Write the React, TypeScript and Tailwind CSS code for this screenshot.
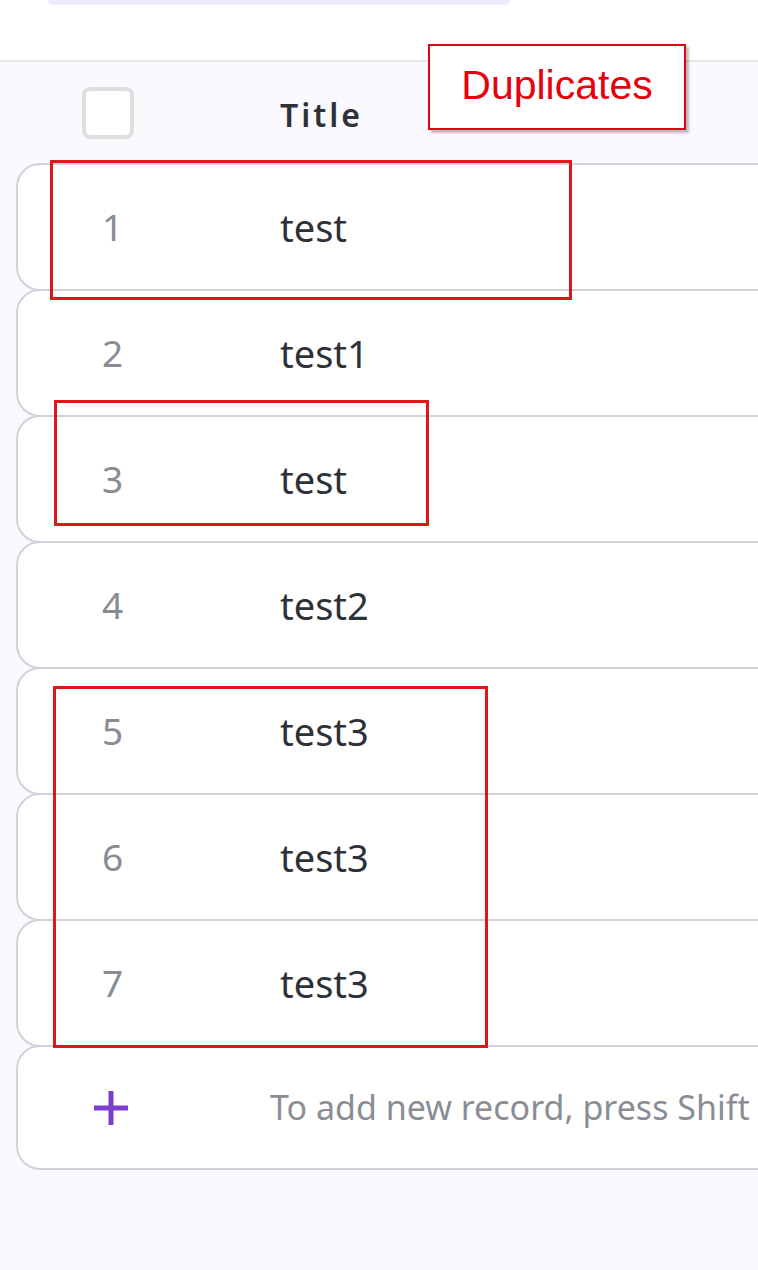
import { Fragment } from 'react';

const rows = [
  { id: 1, title: 'test' },
  { id: 2, title: 'test1' },
  { id: 3, title: 'test' },
  { id: 4, title: 'test2' },
  { id: 5, title: 'test3' },
  { id: 6, title: 'test3' },
  { id: 7, title: 'test3' },
];

const PlusIcon = () => (
  <svg width="36" height="36" viewBox="0 0 36 36" fill="none">
    <path d="M18 1v34M1 18h34" stroke="#7b3fcf" strokeWidth="5" />
  </svg>
);

const App = () => {
  return (
    <main className="relative w-[758px] h-[1270px] overflow-hidden bg-[#faf9fe] font-['Noto_Sans',sans-serif]">
      <div className="h-[62px] bg-white border-b-2 border-[#e8e6ed]">
        <div className="ml-[48px] w-[462px] h-[5px] bg-[#efeafb] rounded-b-xl" />
      </div>

      <div className="flex items-center h-[101px]">
        <div className="ml-[82px] w-[52px] h-[52px] rounded-lg border-4 border-[#dedede] bg-white" />
        <span className="ml-[146px] mt-1 text-[32px] font-semibold tracking-[3px] text-[#2e3138]">Title</span>
      </div>

      <div className="flex flex-col pl-4">
        {rows.map((row, i) => (
          <Fragment key={row.id}>
            <div
              className={`flex items-center w-[900px] h-[128px] bg-white border-2 border-[#d4d0dc] rounded-l-[24px] ${
                i > 0 ? '-mt-[2px]' : ''
              }`}
            >
              <span className="w-[262px] pl-[84px] text-[37px] text-[#898d93]">{row.id}</span>
              <span className="text-[38px] text-[#2e3138]">{row.title}</span>
            </div>
          </Fragment>
        ))}
        <div className="flex items-center w-[900px] h-[125px] -mt-[2px] bg-white border-2 border-[#d4d0dc] rounded-l-[24px]">
          <span className="w-[252px] pl-[75px] flex">
            <PlusIcon />
          </span>
          <span className="text-[34px] text-[#8a8e94]">To add new record, press Shift</span>
        </div>
      </div>

      {/* annotations */}
      <div className="absolute left-[428px] top-[44px] w-[258px] h-[86px] flex items-center justify-center bg-white border-2 border-[#e3000f] shadow-[3px_3px_2px_rgba(0,0,0,0.25)]">
        <span className="font-['Liberation_Sans',Arial,sans-serif] text-[41px] text-[#e8000e] leading-none -mt-1">Duplicates</span>
      </div>
      <div className="absolute left-[50px] top-[160px] w-[522px] h-[140px] border-[3px] border-[#e0161b]" />
      <div className="absolute left-[54px] top-[400px] w-[375px] h-[126px] border-[3px] border-[#e0161b]" />
      <div className="absolute left-[53px] top-[686px] w-[435px] h-[362px] border-[3px] border-[#e0161b]" />
    </main>
  );
};

export default App;
